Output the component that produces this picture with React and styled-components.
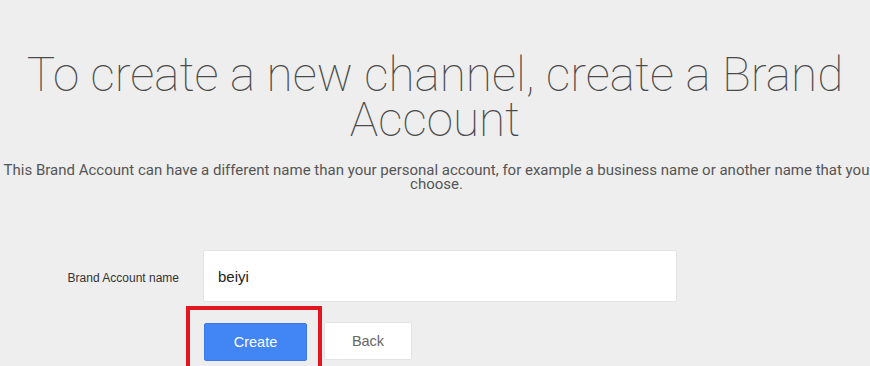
import React from 'react';
import styled, { createGlobalStyle } from 'styled-components';

const GlobalStyle = createGlobalStyle`
  html, body {
    margin: 0;
    padding: 0;
    background: #eeeeee;
    overflow: hidden;
  }
  body {
    font-family: Roboto, "Liberation Sans", Arial, sans-serif;
  }
`;

const Page = styled.div`
  width: 870px;
  height: 366px;
  overflow: hidden;
  padding-top: 53px;
  box-sizing: border-box;
`;

const Title = styled.h1`
  margin: 0 -10px;
  font-family: Roboto, sans-serif;
  font-weight: 100;
  font-size: 47.7px;
  line-height: 45px;
  color: #4a4a4a;
  text-align: center;
`;

const Subtitle = styled.p`
  margin: 20px -12px 0 -9px;
  font-family: Roboto, sans-serif;
  font-size: 15px;
  line-height: 14px;
  color: #555;
  text-align: center;
`;

const Form = styled.div`
  display: grid;
  grid-template-columns: 181px 474px;
  column-gap: 22px;
  row-gap: 4px;
  align-items: center;
  margin-top: 59px;
`;

const Label = styled.label`
  font-family: "Liberation Sans", Arial, sans-serif;
  font-size: 12px;
  color: #333;
  text-align: right;
  padding-right: 2px;
  padding-top: 3px;
`;

const NameInput = styled.div`
  height: 52px;
  box-sizing: border-box;
  background: #fff;
  border: 1px solid #e3e3e3;
  border-radius: 2px;
  display: flex;
  align-items: center;
  padding-left: 14px;
  font-family: "Liberation Sans", Arial, sans-serif;
  font-size: 15px;
  color: #222;
`;

const Actions = styled.div`
  grid-column: 2;
  display: flex;
  align-items: flex-start;
  margin-left: -17px;
`;

const Highlight = styled.div`
  border: 4px solid #e3151f;
  border-bottom: none;
  padding: 13px 11px 6px 14px;
`;

const Button = styled.button`
  height: 38px;
  box-sizing: border-box;
  border-radius: 2px;
  font-family: "Liberation Sans", Arial, sans-serif;
  font-size: 14.5px;
  cursor: pointer;
  padding: 0;
  width: ${p => p.$width}px;
  background: ${p => (p.$primary ? '#4285f4' : '#fff')};
  color: ${p => (p.$primary ? '#fff' : '#666')};
  border: 1px solid ${p => (p.$primary ? '#3b7ae6' : '#e3e3e3')};
`;

const BackButton = styled(Button)`
  margin-top: 16px;
  margin-left: 2px;
`;

export default function App() {
  return (
    <Page>
      <GlobalStyle />
      <Title>To create a new channel, create a Brand Account</Title>
      <Subtitle>
        This Brand Account can have a different name than your personal account, for example a business name or another name that you choose.
      </Subtitle>
      <Form>
        <Label>Brand Account name</Label>
        <NameInput>beiyi</NameInput>
        <Actions>
          <Highlight>
            <Button $primary $width={103}>Create</Button>
          </Highlight>
          <BackButton $width={88}>Back</BackButton>
        </Actions>
      </Form>
    </Page>
  );
}
